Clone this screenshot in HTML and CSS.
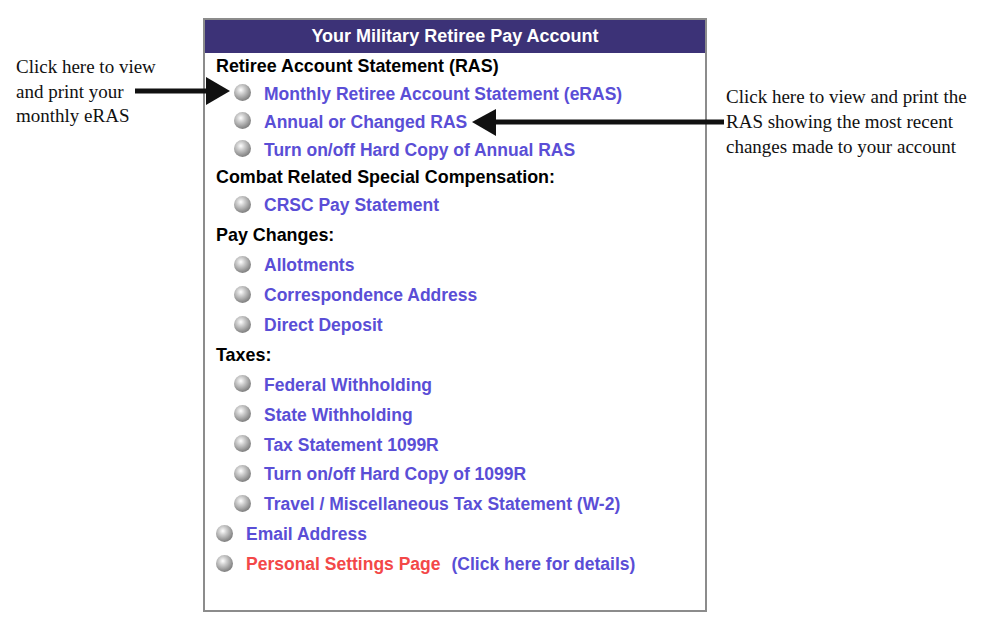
FILE: index.html
```html
<!DOCTYPE html>
<html lang="en">

<head>
    <title>Your Military Retiree Pay Account</title>
    <link rel="stylesheet" href="styles.css">
</head>

<body>
    <div class="page">
        <div class="note note-left">
            Click here to view<br>
            and print your<br>
            monthly eRAS
        </div>

        <div class="account">
            <div class="title">Your Military Retiree Pay Account</div>

            <div class="row head h27">Retiree Account Statement (RAS)</div>
            <div class="row sub h28"><span class="ball"></span><a href="#">Monthly Retiree Account Statement (eRAS)</a></div>
            <div class="row sub h28"><span class="ball"></span><a href="#">Annual or Changed RAS</a></div>
            <div class="row sub h28"><span class="ball"></span><a href="#">Turn on/off Hard Copy of Annual RAS</a></div>

            <div class="row head h27">Combat Related Special Compensation:</div>
            <div class="row sub"><span class="ball"></span><a href="#">CRSC Pay Statement</a></div>

            <div class="row head">Pay Changes:</div>
            <div class="row sub"><span class="ball"></span><a href="#">Allotments</a></div>
            <div class="row sub"><span class="ball"></span><a href="#">Correspondence Address</a></div>
            <div class="row sub"><span class="ball"></span><a href="#">Direct Deposit</a></div>

            <div class="row head">Taxes:</div>
            <div class="row sub"><span class="ball"></span><a href="#">Federal Withholding</a></div>
            <div class="row sub"><span class="ball"></span><a href="#">State Withholding</a></div>
            <div class="row sub"><span class="ball"></span><a href="#">Tax Statement 1099R</a></div>
            <div class="row sub"><span class="ball"></span><a href="#">Turn on/off Hard Copy of 1099R</a></div>
            <div class="row sub"><span class="ball"></span><a href="#">Travel / Miscellaneous Tax Statement (W-2)</a></div>

            <div class="row top"><span class="ball"></span><a href="#">Email Address</a></div>
            <div class="row top"><span class="ball"></span><a href="#" class="red">Personal Settings Page</a><a href="#" class="details">(Click here for details)</a></div>
        </div>

        <div class="note note-right">
            Click here to view and print the<br>
            RAS showing the most recent<br>
            changes made to your account
        </div>
    </div>

    <!-- pointer arrows, drawn over the box edge -->
    <svg class="arrow arrow-left" width="100" height="30" viewBox="0 0 100 30">
        <rect x="0" y="11.5" width="74" height="5" fill="#111"/>
        <polygon points="71,0 95,14 71,28" fill="#111"/>
    </svg>
    <svg class="arrow arrow-right" width="252" height="30" viewBox="0 0 252 30">
        <polygon points="0,13 24,0 24,27" fill="#111"/>
        <rect x="21" y="10.5" width="231" height="5" fill="#111"/>
    </svg>
</body>

</html>
```

FILE: styles.css
```css
body {
    margin: 0;
    background-color: white;
}
.page {
    display: flex;
    align-items: flex-start;
    padding: 18px 0 0 16px;
}
.note {
    font-family: "Liberation Serif", "Times New Roman", serif;
    font-size: 19px;
    line-height: 24.5px;
    color: #111;
}
.note-left {
    width: 187px;
    margin-top: 37px;
}
.note-right {
    margin-left: 19px;
    margin-top: 66px;
    line-height: 25px;
}
.account {
    width: 500px;
    height: 590px;
    border: 2px solid #8c8c8c;
    font-family: "Liberation Sans", Arial, sans-serif;
    font-weight: bold;
}
.title {
    height: 33px;
    line-height: 33px;
    background-color: #3c3277;
    color: white;
    text-align: center;
    font-size: 18px;
}
.row {
    display: flex;
    align-items: center;
    height: 29.9px;
    white-space: nowrap;
}
.h27 {
    height: 27px;
}
.h28 {
    height: 28px;
}
.head {
    padding-left: 11px;
    font-size: 17.9px;
    color: #000;
}
.sub {
    padding-left: 29px;
}
.top {
    padding-left: 11px;
}
.row a {
    font-size: 17.5px;
    color: #5a4ed6;
    text-decoration: none;
}
.row a.red {
    color: #f34848;
}
.row a.details {
    margin-left: 11px;
}
.ball {
    width: 17px;
    height: 17px;
    border-radius: 50%;
    margin-right: 13px;
    margin-top: -3px;
    background: radial-gradient(circle at 40% 35%, #ffffff 0%, #d0d0d0 25%, #959595 60%, #585858 100%);
}
.arrow {
    position: absolute;
}
.arrow-left {
    left: 135px;
    top: 77px;
}
.arrow-right {
    left: 472px;
    top: 109px;
}
```
